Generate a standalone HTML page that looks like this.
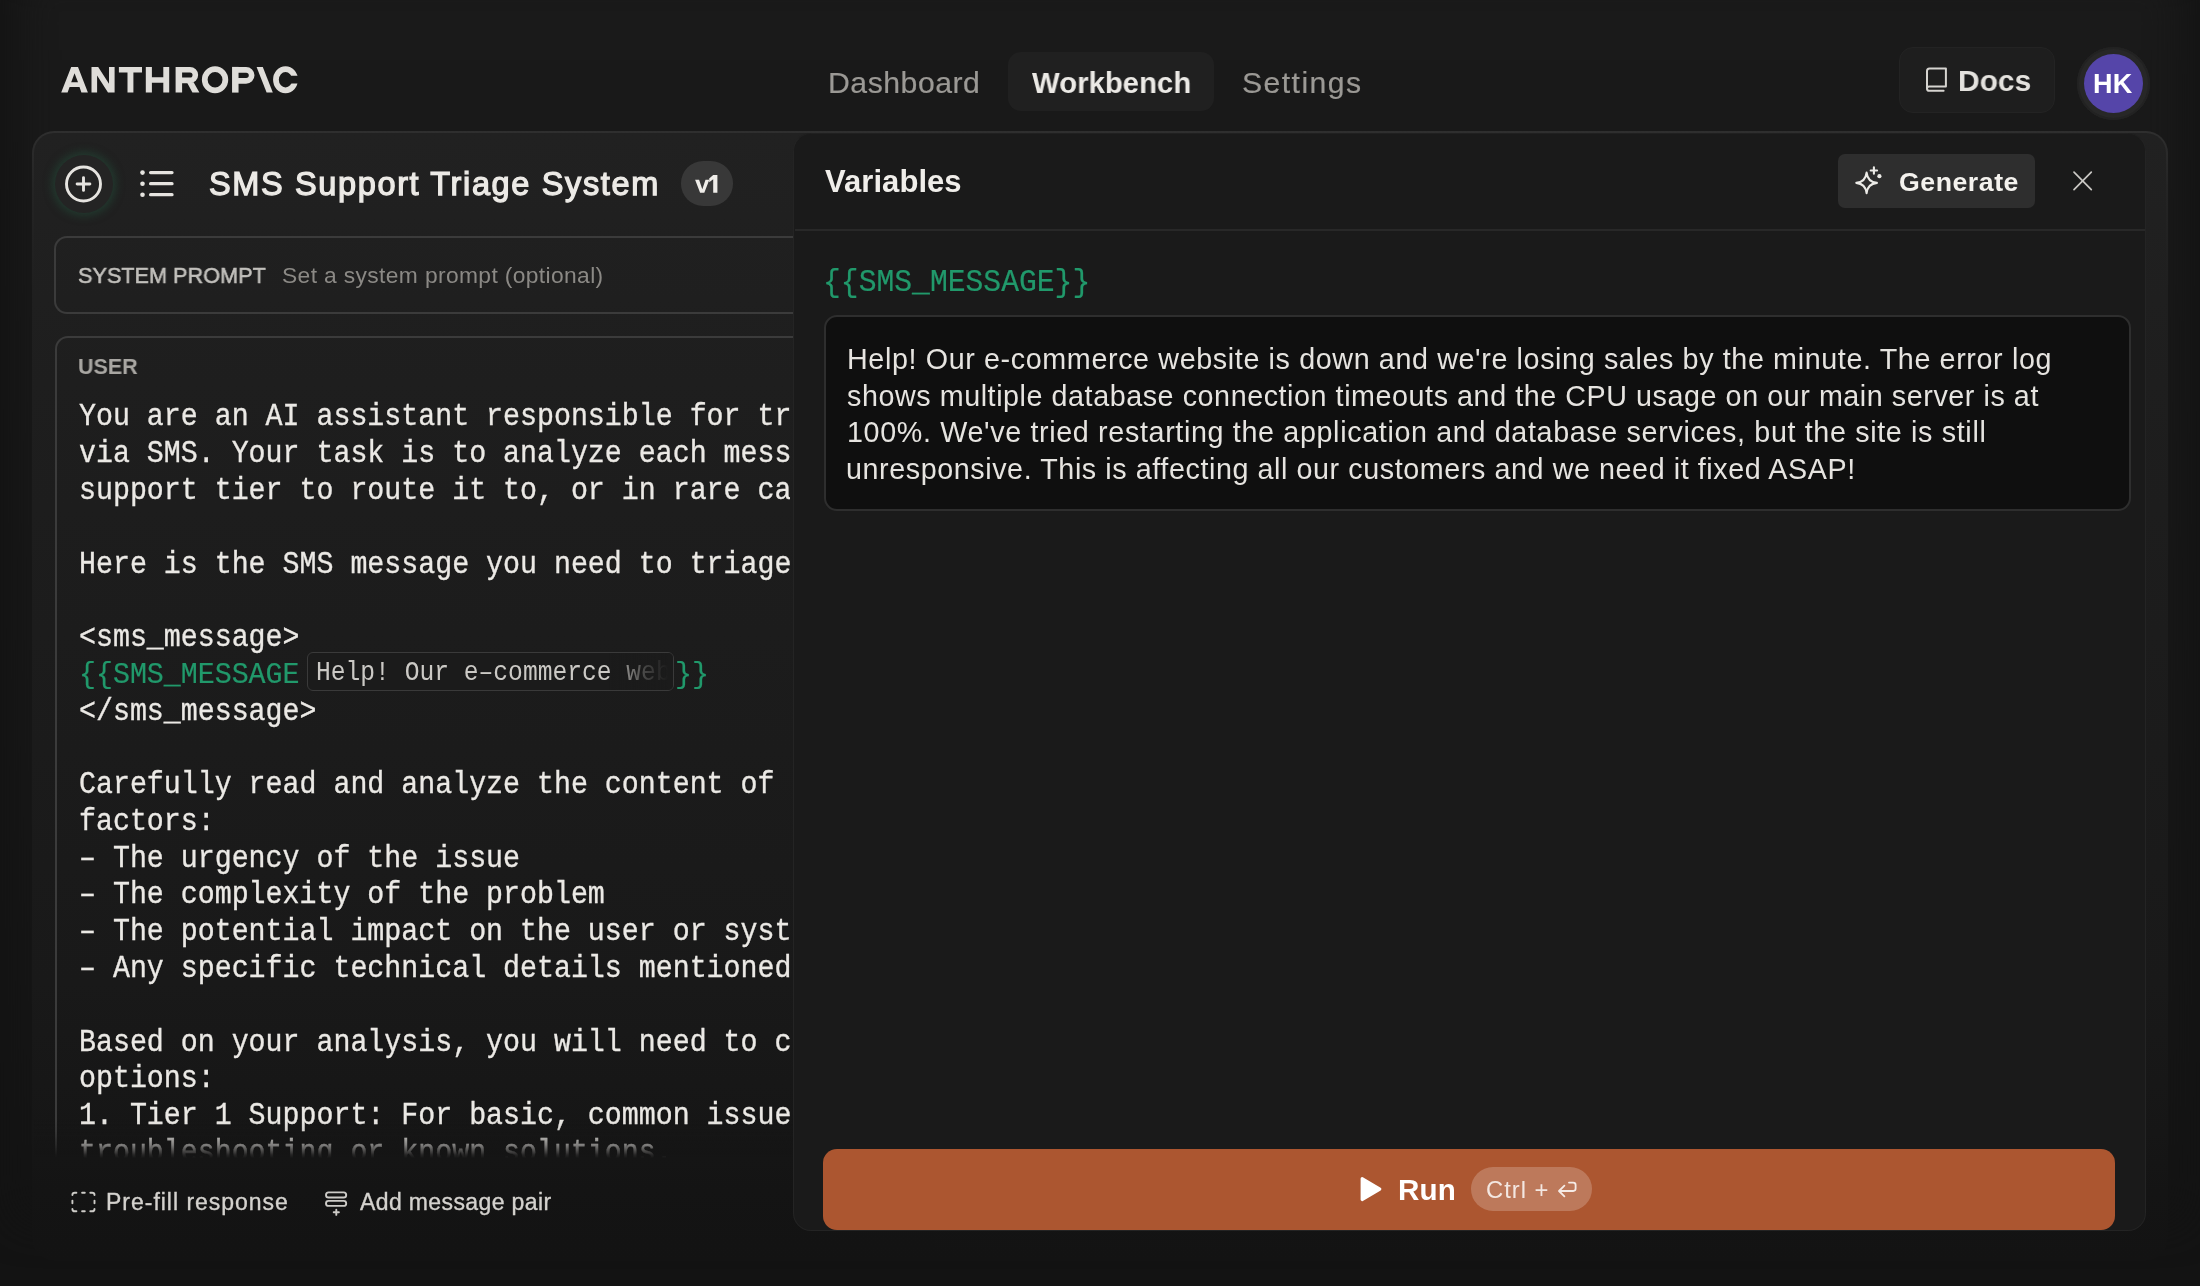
<!DOCTYPE html>
<html>
<head>
<meta charset="utf-8">
<title>Workbench</title>
<style>
*{box-sizing:border-box;margin:0;padding:0}
html,body{width:2200px;height:1286px;overflow:hidden;background:#131313}
body{position:relative;font-family:"Liberation Sans",sans-serif;color:#e8e6e3}
.abs{position:absolute}
.t{will-change:transform;position:absolute;white-space:pre;line-height:1;transform-origin:left top}
.mono{font-family:"Liberation Mono",monospace}
.c{font-size:28.28px;color:#ebe9e5;-webkit-text-stroke:.3px #ebe9e5}
.g{color:#21996b;-webkit-text-stroke:.2px #21996b}
#bgtop{left:16px;top:-30px;width:2168px;height:1250px;background:linear-gradient(to bottom,#1a1a1a 0,#191919 22%,#171717 60%,#151515 85%,#131313 100%);filter:blur(20px)}
#outer{left:32px;top:131px;width:2136px;height:1130px;border:2px solid transparent;border-radius:22px;background:linear-gradient(to bottom,#212121 0,#1e1e1e 250px,#1c1c1c 500px,#191919 850px,#161616 1000px,#141414 1060px,#131313 1128px) padding-box,linear-gradient(to bottom,#2f2f2f 0,#2b2b2b 16px,#242424 60px,#1f1f1f 160px,#1c1c1c 500px,#191919 850px,#161616 1000px,#141414 1060px,#131313 1128px) border-box}
#sys{left:54.1px;top:235.8px;width:780px;height:77.8px;border:2px solid #3b3b3b;border-right:none;border-radius:13px 0 0 13px}
#user{left:55.2px;top:336.3px;width:780px;height:880px;border:2px solid #3b3b3b;border-right:none;border-bottom:none;border-radius:13px 0 0 0}
#fade{left:34px;top:1120px;width:900px;height:128px;background:linear-gradient(to bottom,rgba(21,21,21,0) 0,rgba(21,21,21,.12) 12px,rgba(21,21,21,.5) 25px,rgba(21,21,21,.93) 35px,#151515 38px,#141414 70px,#131313 100%)}
#right{left:793.2px;top:132.8px;width:1353px;height:1098.4px;border:1.3px solid #242424;border-top-color:#202020;border-radius:18px;background:#1a1a1a}
#hdiv{left:795px;top:229px;width:1350px;height:2px;background:#282828}
#tbox{left:823.5px;top:314.5px;width:1307.4px;height:196.2px;border:2px solid #2e2e2e;border-radius:13px;background:#0f0f0f}
#gen{left:1838px;top:154px;width:196.5px;height:53.5px;border-radius:7px;background:#2e2e2e}
#run{left:823px;top:1148.6px;width:1292px;height:81px;border-radius:14px;background:#ac5630}
#kbd{left:1471px;top:1167.2px;width:121.3px;height:44.3px;border-radius:22.2px;background:rgba(255,255,255,.21)}
#wb{left:1008.4px;top:51.5px;width:205.6px;height:59.5px;border-radius:13px;background:#202020}
#docs{left:1899px;top:46.7px;width:156px;height:66px;border-radius:14px;background:#1e1e1e;border:1.5px solid #232323}
#avring{left:2076.5px;top:47px;width:73.2px;height:73.2px;border-radius:50%;background:#272727;box-shadow:inset 0 0 0 2px #222}
#av{left:2083.5px;top:53.8px;width:59.2px;height:59.2px;border-radius:50%;background:#5545a9}
#v1{left:680.6px;top:161.3px;width:52.8px;height:44.5px;border-radius:22.2px;background:#383838}
#plusbg{left:54.5px;top:155px;width:58px;height:58px;border-radius:50%;background:#242424;box-shadow:0 0 9px 3px rgba(36,84,62,.5)}
#chip{left:307px;top:651.6px;width:367px;height:39.8px;border:1.5px solid #3a3a3a;border-radius:6px;background:#1b1b1b;overflow:hidden}
</style>
</head>
<body>
<div class="abs" id="bgtop"></div>
<!-- top nav -->
<svg class="abs" id="logo" style="left:55px;top:60px" width="250" height="40" viewBox="55 60 250 40" fill="#dfddd9">
<path fill-rule="evenodd" d="M61.2 92.6 L71.2 66.9 H78 L87.9 92.6 H81.4 L79.5 87.1 H69.6 L67.6 92.6 Z M71.2 82.2 H78 L74.55 73.2 Z"/>
<path d="M91.5 92.6 V66.9 H98.2 L109 83.8 V66.9 H114.6 V92.6 H108 L97.1 75.6 V92.6 Z"/>
<path d="M118.9 66.9 H142 V72.5 H133.4 V92.6 H127.5 V72.5 H118.9 Z"/>
<path d="M145.8 66.9 H151.9 V77.2 H163.3 V66.9 H169.2 V92.6 H163.3 V82.7 H151.9 V92.6 H145.8 Z"/>
<path d="M175.6 66.9 H182.1 V92.6 H175.6 Z M186.9 82.3 H193.6 L199.4 92.6 H192.4 Z"/>
<path d="M180 69.7 H190 A5.35 5.35 0 0 1 190 80.4 H180" fill="none" stroke="#dfddd9" stroke-width="5.6"/>
<ellipse cx="215.05" cy="79.75" rx="10.3" ry="10.6" fill="none" stroke="#dfddd9" stroke-width="5.75"/>
<path d="M232.05 66.9 H238.55 V92.6 H232.05 Z"/>
<path d="M236 69.8 H246.1 A5.55 5.55 0 0 1 246.1 80.9 H236" fill="none" stroke="#dfddd9" stroke-width="5.7"/>
<path d="M256.6 66.9 H262.8 L272.8 92.6 H266.6 Z"/>
<clipPath id="cc"><path d="M260 60 H310 V75.8 H285.5 V83.5 H310 V100 H260 Z"/></clipPath><ellipse cx="285.5" cy="79.75" rx="9.55" ry="10.6" fill="none" stroke="#dfddd9" stroke-width="5.75" clip-path="url(#cc)"/>
</svg>
<div class="t" id="nav1" style="-webkit-text-stroke:.2px #9b9995;left:828.2px;top:68.14px;font-size:30.2px;font-weight:400;letter-spacing:0.526px;color:#9b9995">Dashboard</div>
<div class="abs" id="wb"></div>
<div class="t" id="nav2" style="transform:scaleX(0.9717);left:1031.8px;top:68.14px;font-size:30.2px;font-weight:700;letter-spacing:0px;color:#eceae6">Workbench</div>
<div class="t" id="nav3" style="-webkit-text-stroke:.2px #9b9995;left:1242px;top:68.14px;font-size:30.2px;font-weight:400;letter-spacing:1.431px;color:#9b9995">Settings</div>
<div class="abs" id="docs"></div>
<svg class="abs" id="book" style="left:1920px;top:62px" width="32" height="34" viewBox="1920 62 32 34" fill="none" stroke="#d6d4d0" stroke-width="2" stroke-linejoin="round" stroke-linecap="round"><path d="M1927 88.5 V71 Q1927 68.5 1929.5 68.5 H1945.9 V86.6 H1929.2 Q1927 86.6 1927 88.7 Q1927 90.8 1929.2 90.8 H1943.6"/></svg>
<div class="t" id="docst" style="transform:scaleX(0.9844);left:1958.43px;top:65.27px;font-size:30.4px;font-weight:700;letter-spacing:0px;color:#e4e2de">Docs</div>
<div class="abs" id="avring"></div>
<div class="abs" id="av"></div>
<div class="t" id="hk" style="left:2093px;top:70.94px;font-size:27.0px;font-weight:700;letter-spacing:0.301px;color:#ffffff">HK</div>

<!-- outer panel -->
<div class="abs" id="outer"></div>
<div class="abs" id="plusbg"></div>
<svg class="abs" id="plus" style="left:60px;top:160px" width="48" height="48" viewBox="60 160 48 48" fill="none" stroke="#e6e4e0" stroke-width="2.9" stroke-linecap="round"><circle cx="83.5" cy="184" r="17"/><path d="M83.5 177.6 V190.4 M77.1 184 H89.9"/></svg>
<svg class="abs" id="list" style="left:136px;top:164px" width="44" height="40" viewBox="136 164 44 40" fill="none" stroke="#e6e4e0" stroke-width="3.3" stroke-linecap="round"><path d="M150.6 172.6 H172 M150.6 183.7 H172 M150.6 194.7 H172"/><g fill="#e6e4e0" stroke="none"><circle cx="142.5" cy="172.6" r="2.3"/><circle cx="142.5" cy="183.7" r="2.3"/><circle cx="142.5" cy="194.7" r="2.3"/></g></svg>
<div class="t" id="title" style="-webkit-text-stroke:1.25px #eceae6;left:209.0px;top:168.09px;font-size:32.5px;font-weight:400;letter-spacing:1.633px;color:#eceae6">SMS Support Triage System</div>
<div class="abs" id="v1"></div>
<svg class="abs" id="v1s" style="left:690px;top:170px" width="34" height="28" viewBox="690 170 34 28" fill="#efede9"><path d="M695.1 179.8 H699.1 L702.3 189.2 L705.5 179.8 H709.3 L704.3 192.7 H700.1 Z"/><path d="M713.2 175 H717.4 V192.7 H713.2 V179.3 L709.2 182.3 V178.4 Z"/></svg>

<div class="abs" id="sys"></div>
<div class="t" id="sp1" style="-webkit-text-stroke:.55px #c2c0bc;transform:scaleX(0.9502);left:78.35px;top:264.0px;font-size:22.8px;font-weight:400;letter-spacing:0px;color:#c2c0bc">SYSTEM PROMPT</div>
<div class="t" id="sp2" style="left:282.2px;top:263.8px;font-size:22.8px;font-weight:400;letter-spacing:0.371px;color:#8b8985">Set a system prompt (optional)</div>

<div class="abs" id="user"></div>
<div class="t" id="usr" style="transform:scaleX(0.97);left:77.63px;top:356.41px;font-size:22.2px;font-weight:700;letter-spacing:0px;color:#a8a6a2">USER</div>

<div class="abs" id="codeclip" style="left:0;top:380px;width:789.5px;height:800px;overflow:hidden">
<div class="t mono c" style="left:79.3px;top:23.43px;transform-origin:0 21.67px;transform:scaleY(1.12)">You are an AI assistant responsible for triaging</div>
<div class="t mono c" style="left:79.3px;top:60.20px;transform-origin:0 21.67px;transform:scaleY(1.12)">via SMS. Your task is to analyze each message and</div>
<div class="t mono c" style="left:79.3px;top:96.97px;transform-origin:0 21.67px;transform:scaleY(1.12)">support tier to route it to, or in rare cases, to</div>
<div class="t mono c" style="left:79.3px;top:170.51px;transform-origin:0 21.67px;transform:scaleY(1.12)">Here is the SMS message you need to triage:</div>
<div class="t mono c" style="left:79.3px;top:244.05px;transform-origin:0 21.67px;transform:scaleY(1.12)">&lt;sms_message&gt;</div>
<div class="t mono c" style="left:79.3px;top:280.82px;transform-origin:0 21.67px;transform:scaleY(1.03)"><span class="g">{{SMS_MESSAGE</span></div>
<div class="t mono c" style="left:79.3px;top:317.59px;transform-origin:0 21.67px;transform:scaleY(1.12)">&lt;/sms_message&gt;</div>
<div class="t mono c" style="left:79.3px;top:391.13px;transform-origin:0 21.67px;transform:scaleY(1.12)">Carefully read and analyze the content of the</div>
<div class="t mono c" style="left:79.3px;top:427.90px;transform-origin:0 21.67px;transform:scaleY(1.12)">factors:</div>
<div class="t mono c" style="left:79.3px;top:464.67px;transform-origin:0 21.67px;transform:scaleY(1.12)">– The urgency of the issue</div>
<div class="t mono c" style="left:79.3px;top:501.44px;transform-origin:0 21.67px;transform:scaleY(1.12)">– The complexity of the problem</div>
<div class="t mono c" style="left:79.3px;top:538.21px;transform-origin:0 21.67px;transform:scaleY(1.12)">– The potential impact on the user or system</div>
<div class="t mono c" style="left:79.3px;top:574.98px;transform-origin:0 21.67px;transform:scaleY(1.12)">– Any specific technical details mentioned</div>
<div class="t mono c" style="left:79.3px;top:648.52px;transform-origin:0 21.67px;transform:scaleY(1.12)">Based on your analysis, you will need to choose</div>
<div class="t mono c" style="left:79.3px;top:685.29px;transform-origin:0 21.67px;transform:scaleY(1.12)">options:</div>
<div class="t mono c" style="left:79.3px;top:722.06px;transform-origin:0 21.67px;transform:scaleY(1.12)">1. Tier 1 Support: For basic, common issues that</div>
<div class="t mono c" style="left:79.3px;top:758.83px;transform-origin:0 21.67px;transform:scaleY(1.12)">troubleshooting or known solutions.</div>
</div>
<div class="abs" id="chip"><div class="t mono" id="chipt" style="left:7.6px;top:8.2px;font-size:24.63px;color:#cbc9c5;transform-origin:0 18.7px;transform:scaleY(1.1)">Help! Our e–commerce website</div><div class="abs" style="right:0;top:0;width:64px;height:100%;background:linear-gradient(to right, rgba(27,27,27,0), rgba(27,27,27,.75) 55%, #1b1b1b 92%)"></div></div>
<div class="t mono c g" id="rb" style="left:674.6px;top:661.0px;transform-origin:0 21.67px;transform:scaleY(1.03)">}}</div>

<div class="abs" id="fade"></div>

<!-- bottom bar -->
<svg class="abs" id="pf" style="left:68px;top:1188px" width="32" height="30" viewBox="68 1188 32 30" fill="none" stroke="#cdcbc7" stroke-width="1.9" stroke-linecap="round"><path d="M72.4 1195.1 Q72.4 1192.8 74.8 1192.8 H76.4 M82.1 1192.8 H84.8 M90.3 1192.8 H92.1 Q94.5 1192.8 94.5 1195.1 M94.5 1200.6 V1203.3 M94.5 1208.9 Q94.5 1211.3 92.1 1211.3 H90.3 M84.8 1211.3 H82.1 M76.4 1211.3 H74.8 Q72.4 1211.3 72.4 1208.9 M72.4 1203.3 V1200.6"/></svg>
<div class="t" id="pft" style="-webkit-text-stroke:.35px #d4d2ce;left:105.7px;top:1191.23px;font-size:23.0px;font-weight:400;letter-spacing:0.982px;color:#d4d2ce">Pre-fill response</div>
<svg class="abs" id="amp" style="left:320px;top:1188px" width="32" height="32" viewBox="320 1188 32 32" fill="none" stroke="#cdcbc7" stroke-width="1.9" stroke-linecap="round" stroke-linejoin="round"><rect x="326" y="1192.4" width="20.2" height="5.1" rx="2.55"/><rect x="326" y="1200.9" width="20.2" height="5" rx="2.5"/><path d="M336.3 1209.7 V1214.9 M333.7 1212.3 H338.9"/></svg>
<div class="t" id="ampt" style="-webkit-text-stroke:.35px #d4d2ce;left:359.8px;top:1191.23px;font-size:23.0px;font-weight:400;letter-spacing:0.379px;color:#d4d2ce">Add message pair</div>

<!-- right panel -->
<div class="abs" id="right"></div>
<div class="abs" id="hdiv"></div>
<div class="t" id="vars" style="left:824.9px;top:165.66px;font-size:31.0px;font-weight:700;letter-spacing:0.056px;color:#f0eeea">Variables</div>
<div class="abs" id="gen"></div>
<svg class="abs" id="spark" style="left:1850px;top:162px" width="36" height="40" viewBox="1850 162 36 40" fill="none" stroke="#ecebe7" stroke-width="2.1" stroke-linejoin="round" stroke-linecap="round"><path d="M1866.6 172.6 Q1867.6 181.9 1876.9 182.9 Q1867.6 183.9 1866.6 193.2 Q1865.6 183.9 1856.3 182.9 Q1865.6 181.9 1866.6 172.6 Z"/><path d="M1873.9 167.3 V173.7 M1870.7 170.5 H1877.1"/><circle cx="1879.4" cy="176.2" r="2.1" fill="#ecebe7" stroke="none"/></svg>
<div class="t" id="gent" style="left:1898.5px;top:169.2px;font-size:26.7px;font-weight:700;letter-spacing:0.529px;color:#f4f2ee">Generate</div>
<svg class="abs" id="x" style="left:2068px;top:166px" width="30" height="30" viewBox="2068 166 30 30" fill="none" stroke="#cac8c4" stroke-width="1.7" stroke-linecap="round"><path d="M2074 172.2 L2091.300 189.700 M2091.300 172.2 L2074 189.700"/></svg>
<div class="t mono g" id="var" style="left:823.1px;top:269.05px;font-size:29.7px;transform-origin:0 22.75px;transform:scaleY(1.075)">{{SMS_MESSAGE}}</div>
<div class="abs" id="tbox"></div>
<div class="t" id="m1" style="left:846.5px;top:344.61px;font-size:28.7px;font-weight:400;letter-spacing:0.628px;color:#e6e4e0">Help! Our e-commerce website is down and we&#x27;re losing sales by the minute. The error log</div>
<div class="t" id="m2" style="left:847.2px;top:381.51px;font-size:28.7px;font-weight:400;letter-spacing:0.565px;color:#e6e4e0">shows multiple database connection timeouts and the CPU usage on our main server is at</div>
<div class="t" id="m3" style="left:846.7px;top:418.31px;font-size:28.7px;font-weight:400;letter-spacing:0.653px;color:#e6e4e0">100%. We&#x27;ve tried restarting the application and database services, but the site is still</div>
<div class="t" id="m4" style="left:846.2px;top:455.01px;font-size:28.7px;font-weight:400;letter-spacing:0.585px;color:#e6e4e0">unresponsive. This is affecting all our customers and we need it fixed ASAP!</div>

<div class="abs" id="run"></div>
<svg class="abs" id="play" style="left:1355px;top:1172px" width="32" height="34" viewBox="1355 1172 32 34"><path d="M1362.100 1178.6 L1379.900 1189.100 L1362.100 1199.600 Z" fill="#fff" stroke="#fff" stroke-width="3" stroke-linejoin="round"/></svg>
<div class="t" id="runt" style="left:1398.2px;top:1174.84px;font-size:29.6px;font-weight:700;letter-spacing:0.176px;color:#ffffff">Run</div>
<div class="abs" id="kbd"></div>
<div class="t" id="kbdt" style="left:1486px;top:1177.55px;font-size:23.8px;font-weight:400;letter-spacing:0.976px;color:rgba(255,255,255,.82)">Ctrl +</div>
<svg class="abs" id="ret" style="left:1552px;top:1176px" width="30" height="28" viewBox="1552 1176 30 28" fill="none" stroke="rgba(255,255,255,.85)" stroke-width="1.8" stroke-linecap="round" stroke-linejoin="round"><path d="M1569 1182.6 H1573.2 Q1575.6 1182.6 1575.6 1185 V1188.6 Q1575.6 1191 1573.2 1191 H1559.2 M1564.4 1185.6 L1559 1191 L1564.4 1196.4"/></svg>
</body>
</html>
